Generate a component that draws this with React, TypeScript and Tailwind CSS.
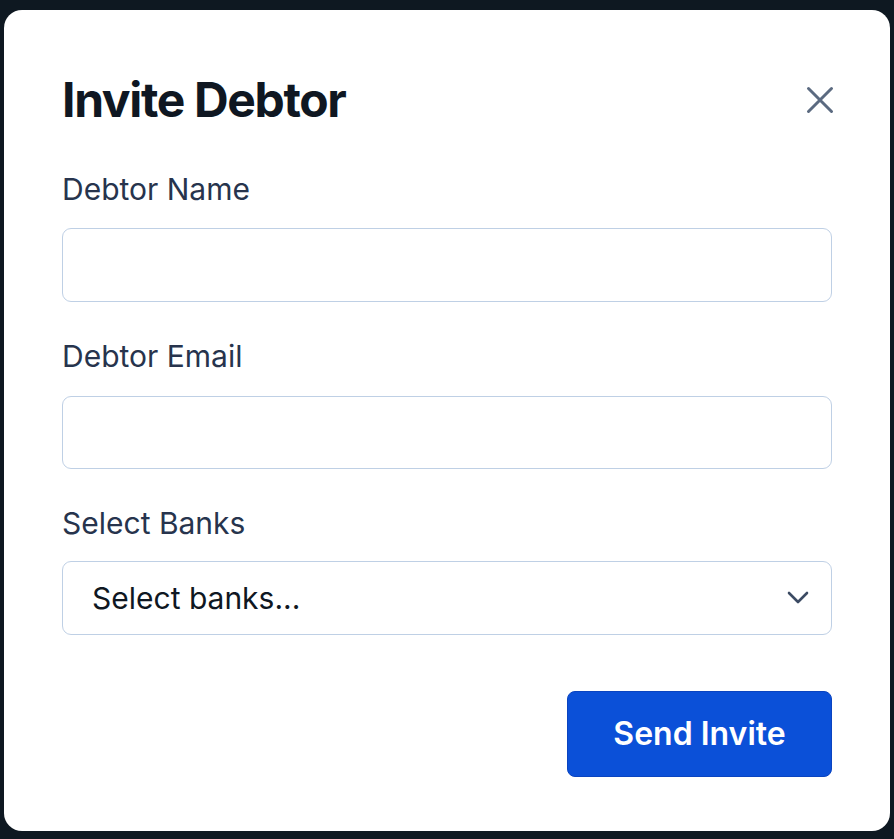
import React from "react";

export default function App() {
  return (
    <div
      className="w-[894px] h-[839px] bg-[#0e1821] pt-[10px] pl-[4px]"
      style={{ fontFamily: "Inter, 'Noto Sans', sans-serif" }}
    >
      <div className="w-[886px] h-[821px] bg-white rounded-[18px] pl-[58px] pr-[58px] pt-[66px] flex flex-col">
        <div className="flex items-center justify-between h-[48px]">
          <h1 className="text-[48px] font-bold text-[#0f1722] leading-none tracking-[-1.35px]">Invite Debtor</h1>
          <button className="w-[30px] h-[30px] flex items-center justify-center -mr-[3px]">
            <svg width="30" height="30" viewBox="0 0 30 30" fill="none" stroke="#5b6a80" strokeWidth="3" strokeLinecap="round">
              <path d="M3.5 3.5 L26.5 26.5 M26.5 3.5 L3.5 26.5" />
            </svg>
          </button>
        </div>
        <label className="mt-[50px] text-[30px] text-[#27344d] leading-none">Debtor Name</label>
        <div className="mt-[24px] h-[74px] rounded-[9px] border border-[#bfd0e5]" />
        <label className="mt-[39px] text-[30px] text-[#27344d] leading-none">Debtor Email</label>
        <div className="mt-[25px] h-[73px] rounded-[9px] border border-[#bfd0e5]" />
        <label className="mt-[39px] text-[30px] text-[#27344d] leading-none">Select Banks</label>
        <div className="mt-[23px] h-[74px] rounded-[9px] border border-[#bfd0e5] flex items-center justify-between pl-[29px] pr-[22px]">
          <span className="text-[30px] text-[#0f1722] leading-none">Select banks...</span>
          <svg width="22" height="14" viewBox="0 0 22 14" fill="none" stroke="#3c4b63" strokeWidth="2.6" strokeLinecap="round" strokeLinejoin="round">
            <path d="M2 2 L11 11 L20 2" />
          </svg>
        </div>
        <div className="mt-[56px] flex justify-end">
          <button className="w-[265px] h-[86px] rounded-[8px] bg-[#0b50d8] border border-[#0a44c0] text-white text-[32px] font-semibold leading-none">
            Send Invite
          </button>
        </div>
      </div>
    </div>
  );
}
